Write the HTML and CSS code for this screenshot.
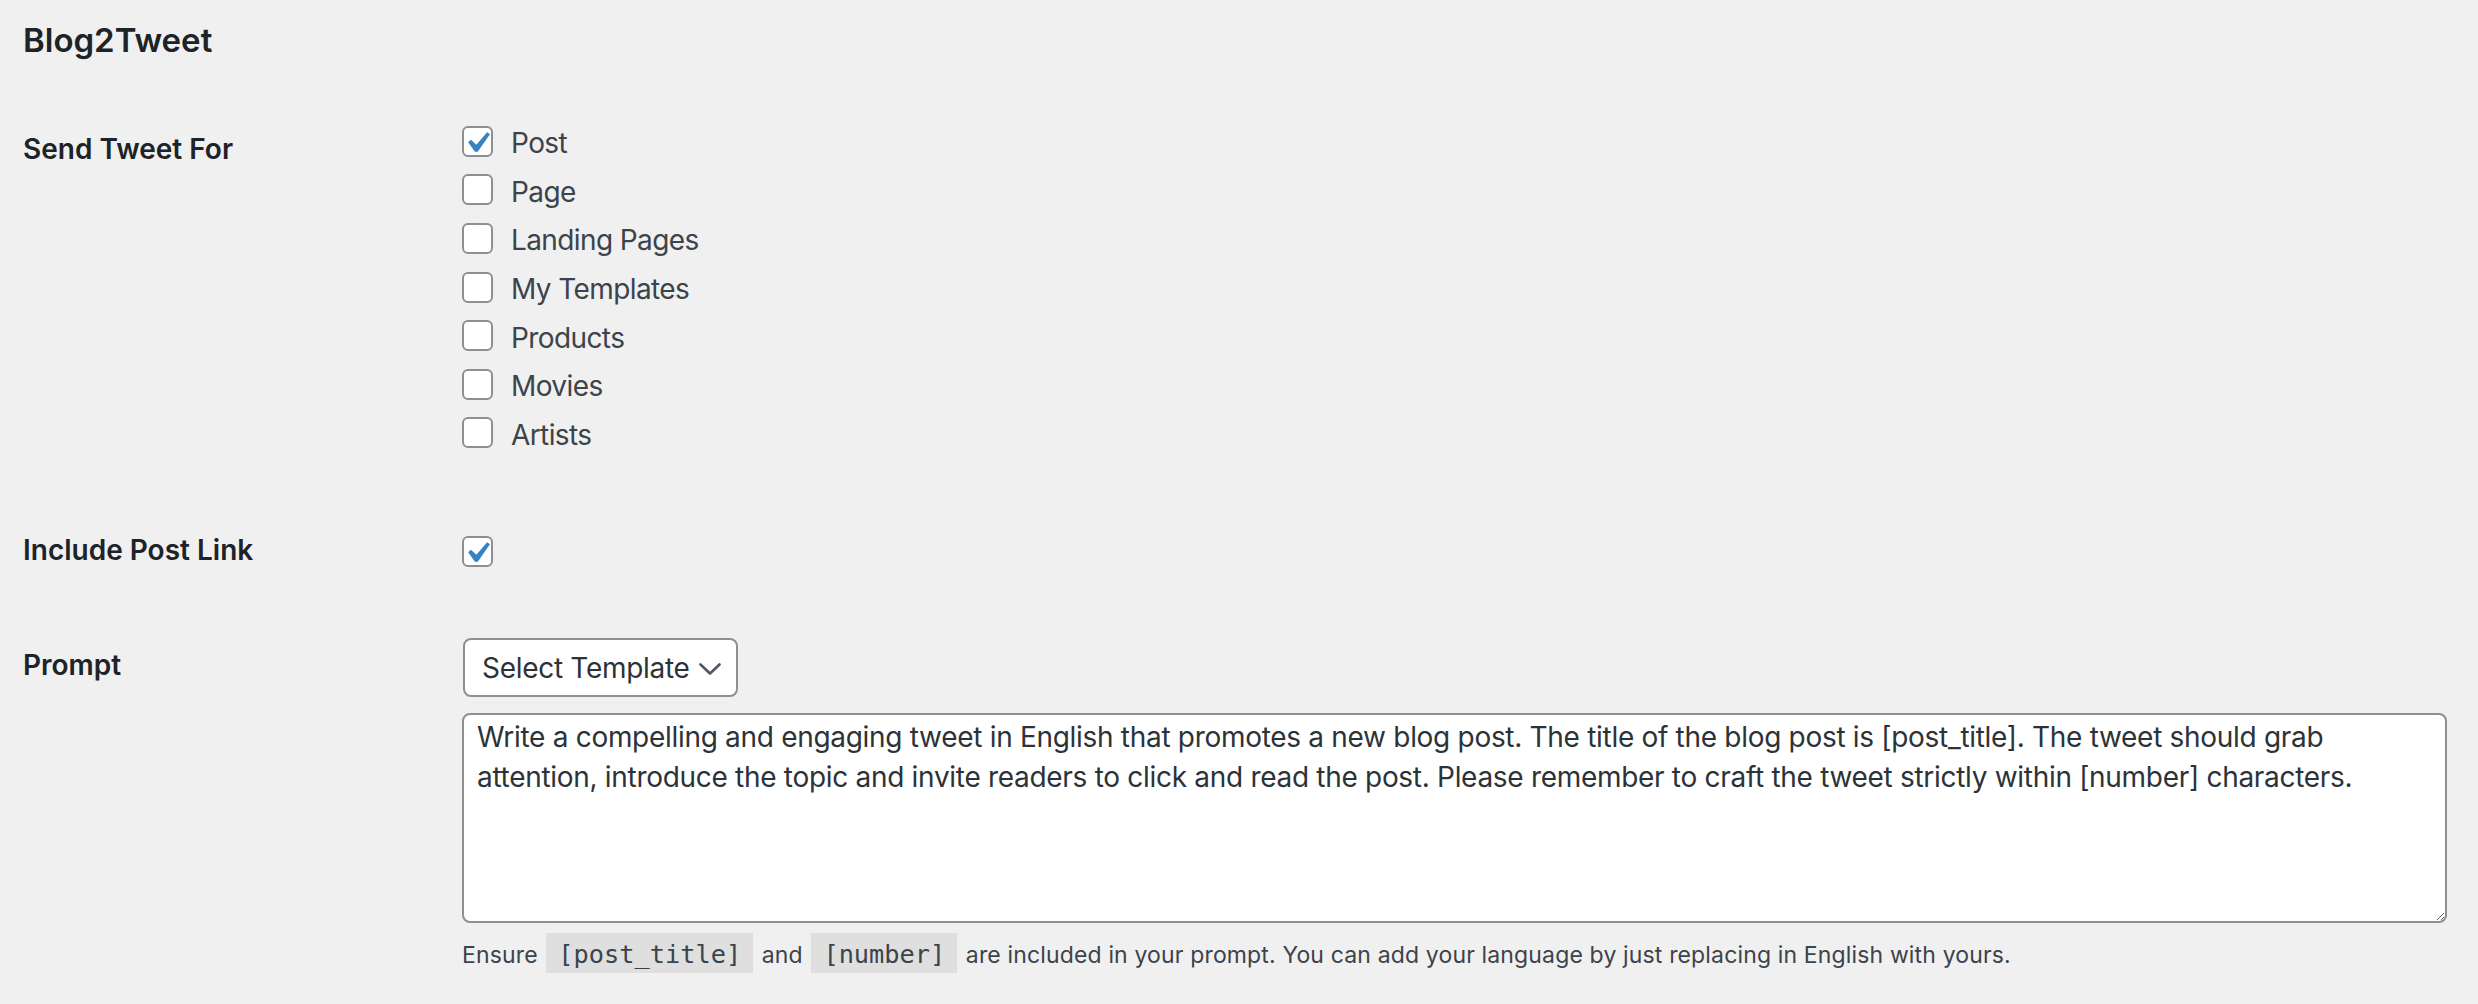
FILE: index.html
```html
<!DOCTYPE html>
<html lang="en">
<head>
<meta charset="utf-8">
<title>Blog2Tweet</title>
<link rel="stylesheet" href="styles.css">
</head>
<body>
<div class="wrap">
  <h2 class="title">Blog2Tweet</h2>

  <div class="row row-types">
    <div class="th">Send Tweet For</div>
    <div class="td">
      <label class="opt"><span class="cb"><svg class="tick" viewBox="0 0 20 20"><path d="M14.83 4.89l1.34.94-5.81 8.38H9.02L5.78 9.67l1.34-1.25 2.57 2.4z"/></svg></span><span class="opt-text">Post</span></label>
      <label class="opt"><span class="cb"></span><span class="opt-text">Page</span></label>
      <label class="opt"><span class="cb"></span><span class="opt-text">Landing Pages</span></label>
      <label class="opt"><span class="cb"></span><span class="opt-text">My Templates</span></label>
      <label class="opt"><span class="cb"></span><span class="opt-text">Products</span></label>
      <label class="opt"><span class="cb"></span><span class="opt-text">Movies</span></label>
      <label class="opt"><span class="cb"></span><span class="opt-text">Artists</span></label>
    </div>
  </div>

  <div class="row row-link">
    <div class="th">Include Post Link</div>
    <div class="td">
      <span class="cb"><svg class="tick" viewBox="0 0 20 20"><path d="M14.83 4.89l1.34.94-5.81 8.38H9.02L5.78 9.67l1.34-1.25 2.57 2.4z"/></svg></span>
    </div>
  </div>

  <div class="row row-prompt">
    <div class="th">Prompt</div>
    <div class="td">
      <div class="select">
        <span class="select-text">Select Template</span>
        <svg class="chev" viewBox="0 0 22 13"><polyline points="1.5,1.5 11,10.5 20.5,1.5"/></svg>
      </div>
      <textarea class="prompt" rows="5">Write a compelling and engaging tweet in English that promotes a new blog post. The title of the blog post is [post_title]. The tweet should grab attention, introduce the topic and invite readers to click and read the post. Please remember to craft the tweet strictly within [number] characters.</textarea>
      <p class="description">Ensure <code>[post_title]</code> and <code>[number]</code> are included in your prompt. You can add your language by just replacing in English with yours.</p>
    </div>
  </div>
</div>
</body>
</html>
```

FILE: styles.css
```css
html, body {
  margin: 0;
  padding: 0;
  background: #f0f0f1;
}

body {
  font-family: Inter, "Noto Sans", "Liberation Sans", sans-serif;
  color: #3c434a;
}

.wrap {
  padding: 0 31px 0 23px;
}

.title {
  margin: 0;
  padding-top: 18px;
  font-size: 33px;
  line-height: 44px;
  font-weight: 600;
  color: #1d2327;
}

.row {
  display: grid;
  grid-template-columns: 439px 1fr;
}

.th {
  font-size: 28px;
  font-weight: 600;
  line-height: 36px;
  color: #1d2327;
}

/* Send Tweet For */
.row-types {
  margin-top: 55px;
}
.row-types .th {
  padding-top: 14px;
}

.opt {
  display: flex;
  align-items: center;
  height: 48.6px;
  font-size: 28px;
  letter-spacing: -0.6px;
  color: #3c434a;
}

.opt-text {
  padding-top: 4px;
  margin-left: 18px;
}

.cb {
  position: relative;
  flex: none;
  display: inline-block;
  box-sizing: border-box;
  width: 31px;
  height: 31px;
  border: 2px solid #8c8f94;
  border-radius: 6px;
  background: #fff;
}

.tick {
  position: absolute;
  left: -8px;
  top: -6px;
  width: 42px;
  height: 42px;
  fill: #3582c4;
}

/* Include Post Link */
.row-link {
  margin-top: 79px;
}
.row-link .th {
  line-height: 28px;
}
.row-link .td {
  height: 31px;
}

/* Prompt */
.row-prompt {
  margin-top: 71px;
}
.row-prompt .th {
  padding-top: 9px;
}

.select {
  box-sizing: border-box;
  width: 275px;
  height: 59px;
  border: 2px solid #8c8f94;
  border-radius: 8px;
  background: #fff;
  display: flex;
  align-items: center;
  justify-content: space-between;
  padding: 0 15px 0 17px;
  margin-left: 1px;
  font-size: 28px;
  letter-spacing: -0.3px;
  color: #2c3338;
}

.chev {
  width: 22px;
  height: 13px;
  margin-top: 3px;
  fill: none;
  stroke: #50575e;
  stroke-width: 2.6;
  stroke-linecap: round;
  stroke-linejoin: round;
}

.prompt {
  display: block;
  box-sizing: border-box;
  width: 100%;
  height: 210px;
  margin: 16px 0 0 0;
  padding: 2px 13px 1px;
  border: 2px solid #8c8f94;
  border-radius: 8px;
  background: #fff;
  font-family: Inter, "Noto Sans", "Liberation Sans", sans-serif;
  font-size: 28px;
  letter-spacing: -0.3px;
  line-height: 40px;
  color: #2c3338;
  resize: vertical;
  outline: none;
}

.description {
  margin: 11px 0 0 0;
  font-size: 23px;
  letter-spacing: 0.15px;
  line-height: 42px;
  color: #3c434a;
}

.description code {
  font-family: "DejaVu Sans Mono", "Liberation Mono", monospace;
  font-size: 25.3px;
  letter-spacing: 0;
  padding: 7px 12px 4px;
  margin: 0 2px;
  background: rgba(0, 0, 0, 0.07);
  color: #3c434a;
}
```
